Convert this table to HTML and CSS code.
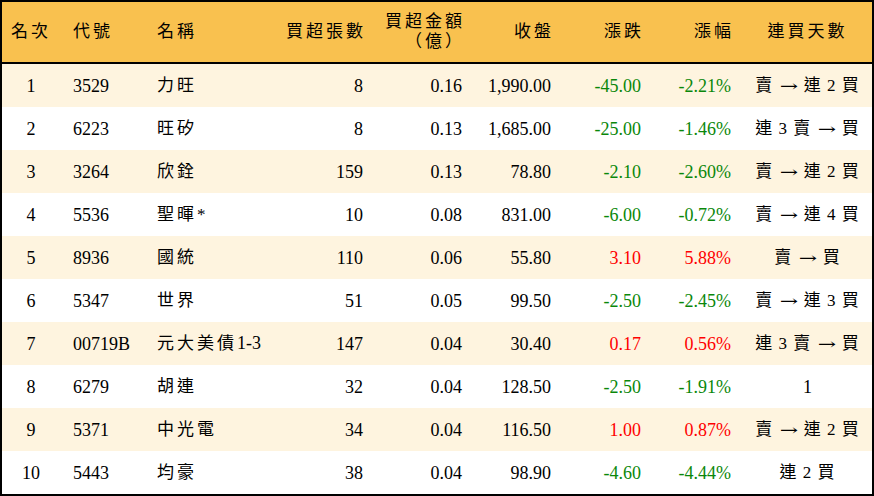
FILE: index.html
```html
<!DOCTYPE html>
<html lang="zh-Hant">
<head>
<meta charset="utf-8">
<title>買超排行</title>
<link rel="stylesheet" href="styles.css">
</head>
<body>
<table class="rank">
  <colgroup>
    <col class="c1"><col class="c2"><col class="c3"><col class="c4"><col class="c5"><col class="c6"><col class="c7"><col class="c8"><col class="c9">
  </colgroup>
  <thead>
    <tr>
      <th class="ctr cjk">名次</th>
      <th class="lft cjk">代號</th>
      <th class="lft cjk">名稱</th>
      <th class="rgt cjk">買超張數</th>
      <th class="rgt cjk">買超金額<br>（億）</th>
      <th class="rgt cjk">收盤</th>
      <th class="rgt cjk">漲跌</th>
      <th class="rgt cjk">漲幅</th>
      <th class="ctr cjk">連買天數</th>
    </tr>
  </thead>
  <tbody>
    <tr class="odd"><td class="ctr">1</td><td class="lft">3529</td><td class="lft cjk">力旺</td><td class="rgt">8</td><td class="rgt">0.16</td><td class="rgt">1,990.00</td><td class="rgt dn">-45.00</td><td class="rgt dn">-2.21%</td><td class="ctr days">賣 <span class="arr">→</span> 連 2 買</td></tr>
    <tr><td class="ctr">2</td><td class="lft">6223</td><td class="lft cjk">旺矽</td><td class="rgt">8</td><td class="rgt">0.13</td><td class="rgt">1,685.00</td><td class="rgt dn">-25.00</td><td class="rgt dn">-1.46%</td><td class="ctr days">連 3 賣 <span class="arr">→</span> 買</td></tr>
    <tr class="odd"><td class="ctr">3</td><td class="lft">3264</td><td class="lft cjk">欣銓</td><td class="rgt">159</td><td class="rgt">0.13</td><td class="rgt">78.80</td><td class="rgt dn">-2.10</td><td class="rgt dn">-2.60%</td><td class="ctr days">賣 <span class="arr">→</span> 連 2 買</td></tr>
    <tr><td class="ctr">4</td><td class="lft">5536</td><td class="lft cjk">聖暉*</td><td class="rgt">10</td><td class="rgt">0.08</td><td class="rgt">831.00</td><td class="rgt dn">-6.00</td><td class="rgt dn">-0.72%</td><td class="ctr days">賣 <span class="arr">→</span> 連 4 買</td></tr>
    <tr class="odd"><td class="ctr">5</td><td class="lft">8936</td><td class="lft cjk">國統</td><td class="rgt">110</td><td class="rgt">0.06</td><td class="rgt">55.80</td><td class="rgt up">3.10</td><td class="rgt up">5.88%</td><td class="ctr days">賣 <span class="arr">→</span> 買</td></tr>
    <tr><td class="ctr">6</td><td class="lft">5347</td><td class="lft cjk">世界</td><td class="rgt">51</td><td class="rgt">0.05</td><td class="rgt">99.50</td><td class="rgt dn">-2.50</td><td class="rgt dn">-2.45%</td><td class="ctr days">賣 <span class="arr">→</span> 連 3 買</td></tr>
    <tr class="odd"><td class="ctr">7</td><td class="lft">00719B</td><td class="lft cjk">元大美債<span class="lat">1-3</span></td><td class="rgt">147</td><td class="rgt">0.04</td><td class="rgt">30.40</td><td class="rgt up">0.17</td><td class="rgt up">0.56%</td><td class="ctr days">連 3 賣 <span class="arr">→</span> 買</td></tr>
    <tr><td class="ctr">8</td><td class="lft">6279</td><td class="lft cjk">胡連</td><td class="rgt">32</td><td class="rgt">0.04</td><td class="rgt">128.50</td><td class="rgt dn">-2.50</td><td class="rgt dn">-1.91%</td><td class="ctr">1</td></tr>
    <tr class="odd"><td class="ctr">9</td><td class="lft">5371</td><td class="lft cjk">中光電</td><td class="rgt">34</td><td class="rgt">0.04</td><td class="rgt">116.50</td><td class="rgt up">1.00</td><td class="rgt up">0.87%</td><td class="ctr days">賣 <span class="arr">→</span> 連 2 買</td></tr>
    <tr><td class="ctr">10</td><td class="lft">5443</td><td class="lft cjk">均豪</td><td class="rgt">38</td><td class="rgt">0.04</td><td class="rgt">98.90</td><td class="rgt dn">-4.60</td><td class="rgt dn">-4.44%</td><td class="ctr days">連 2 買</td></tr>
  </tbody>
</table>
</body>
</html>
```
FILE: styles.css
```css
html, body {
  margin: 0;
  padding: 0;
  background: #ffffff;
}
.rank {
  width: 874px;
  border: 2px solid #000;
  border-spacing: 0;
  table-layout: fixed;
  font-family: "Liberation Serif", "Noto Sans CJK TC", serif;
  font-size: 18px;
  color: #000;
}
.c1 { width: 58px; }
.c2 { width: 84px; }
.c3 { width: 121px; }
.c4 { width: 110px; }
.c5 { width: 99px; }
.c6 { width: 89px; }
.c7 { width: 90px; }
.c8 { width: 90px; }
.c9 { width: 129px; }
.rank th {
  height: 60px;
  padding: 0;
  background: #f9c14f;
  border-bottom: 2px solid #000;
  font-weight: normal;
  line-height: 20px;
  vertical-align: middle;
}
.rank td {
  height: 43px;
  padding: 0;
  line-height: 20px;
  vertical-align: middle;
  white-space: nowrap;
}
.rank tr.odd td {
  background: #fef4df;
}
.cjk {
  font-size: 17px;
  letter-spacing: 3px;
}
.days {
  font-size: 17px;
  letter-spacing: 1px;
}
.arr {
  display: inline-block;
  width: 20px;
  text-align: center;
  letter-spacing: 0;
  font-family: "DejaVu Serif", serif;
  font-size: 15px;
  transform: scaleX(1.45);
}
.lat {
  font-size: 18px;
  letter-spacing: 0;
}
.ctr { text-align: center; }
.lft { text-align: left; padding-left: 13px !important; }
.rgt { text-align: right; padding-right: 12px !important; }
.rgt.cjk { padding-right: 9px !important; }
.dn { color: #0a870a; }
.up { color: #ff0000; }
```
